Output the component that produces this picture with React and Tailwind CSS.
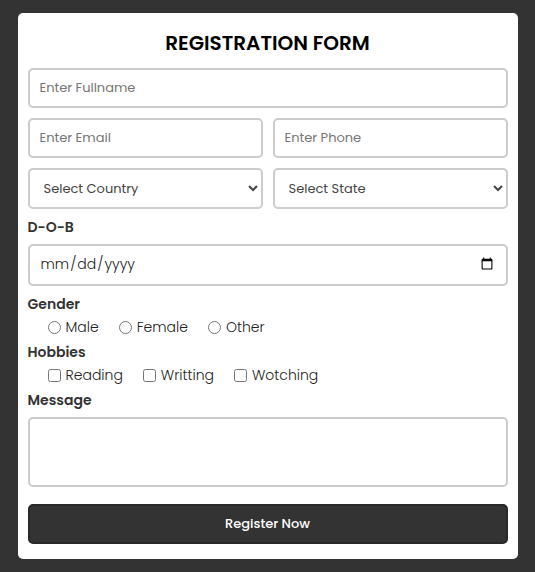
const field =
  "block w-full min-w-0 rounded-[5px] border-2 border-[#cccccc] bg-white outline-none focus:border-[#333333]";
const textField = `${field} h-10 px-2.5 text-[13px] text-[#333333] placeholder:text-[#757575]`;
const selectField = `${field} h-[41px] px-2.5 text-[13px] text-[#444444]`;
const heading = "block text-sm leading-6 font-semibold text-[#333333]";

function Choice({ type, name, label }) {
  return (
    <label className="flex items-center gap-[5px]">
      <input type={type} name={name} value={label} className="size-[13px]" />
      {label}
    </label>
  );
}

function ChoiceGroup({ title, type, name, options }) {
  return (
    <fieldset>
      <legend className={heading}>{title}</legend>
      <div className="flex h-6 items-center gap-5 pb-0.5 pl-5 text-sm font-light text-[#222222]">
        {options.map((option) => (
          <Choice key={option} type={type} name={name} label={option} />
        ))}
      </div>
    </fieldset>
  );
}

export default function App() {
  return (
    <main className="flex min-h-screen items-center justify-center bg-[#333333] font-[Poppins,Inter,sans-serif]">
      <form
        className="w-full max-w-[500px] rounded-[5px] bg-white px-2.5 pt-[15px] pb-[15px]"
        onSubmit={(event) => event.preventDefault()}
      >
        <h1 className="mb-2.5 text-center text-xl leading-[30px] font-semibold text-black">
          REGISTRATION FORM
        </h1>

        <div className="grid grid-cols-2 gap-2.5">
          <input type="text" aria-label="Full name" placeholder="Enter Fullname" className={`${textField} col-span-2`} />
          <input type="email" aria-label="Email" placeholder="Enter Email" className={textField} />
          <input type="tel" aria-label="Phone" placeholder="Enter Phone" className={textField} />
          <select aria-label="Country" className={selectField}>
            <option>Select Country</option>
          </select>
          <select aria-label="State" className={selectField}>
            <option>Select State</option>
          </select>
        </div>

        <label htmlFor="dob" className={`${heading} mt-1.5 mb-[5px]`}>
          D-O-B
        </label>
        <input id="dob" type="date" className={`${field} mb-1.5 h-[42px] px-2.5 pb-0.5 text-sm font-light text-[#222222]`} />

        <ChoiceGroup title="Gender" type="radio" name="gender" options={["Male", "Female", "Other"]} />
        <ChoiceGroup title="Hobbies" type="checkbox" name="hobbies" options={["Reading", "Writting", "Wotching"]} />

        <label htmlFor="message" className={`${heading} mb-[5px]`}>
          Message
        </label>
        <textarea id="message" className={`${field} h-[70px] resize-none p-2.5 text-[13px] text-[#333333]`} />

        <button
          type="submit"
          className="mt-[17px] block h-10 w-full rounded-[5px] border-2 border-[#292929] bg-[#333333] text-[13px] font-medium text-white"
        >
          Register Now
        </button>
      </form>
    </main>
  );
}
